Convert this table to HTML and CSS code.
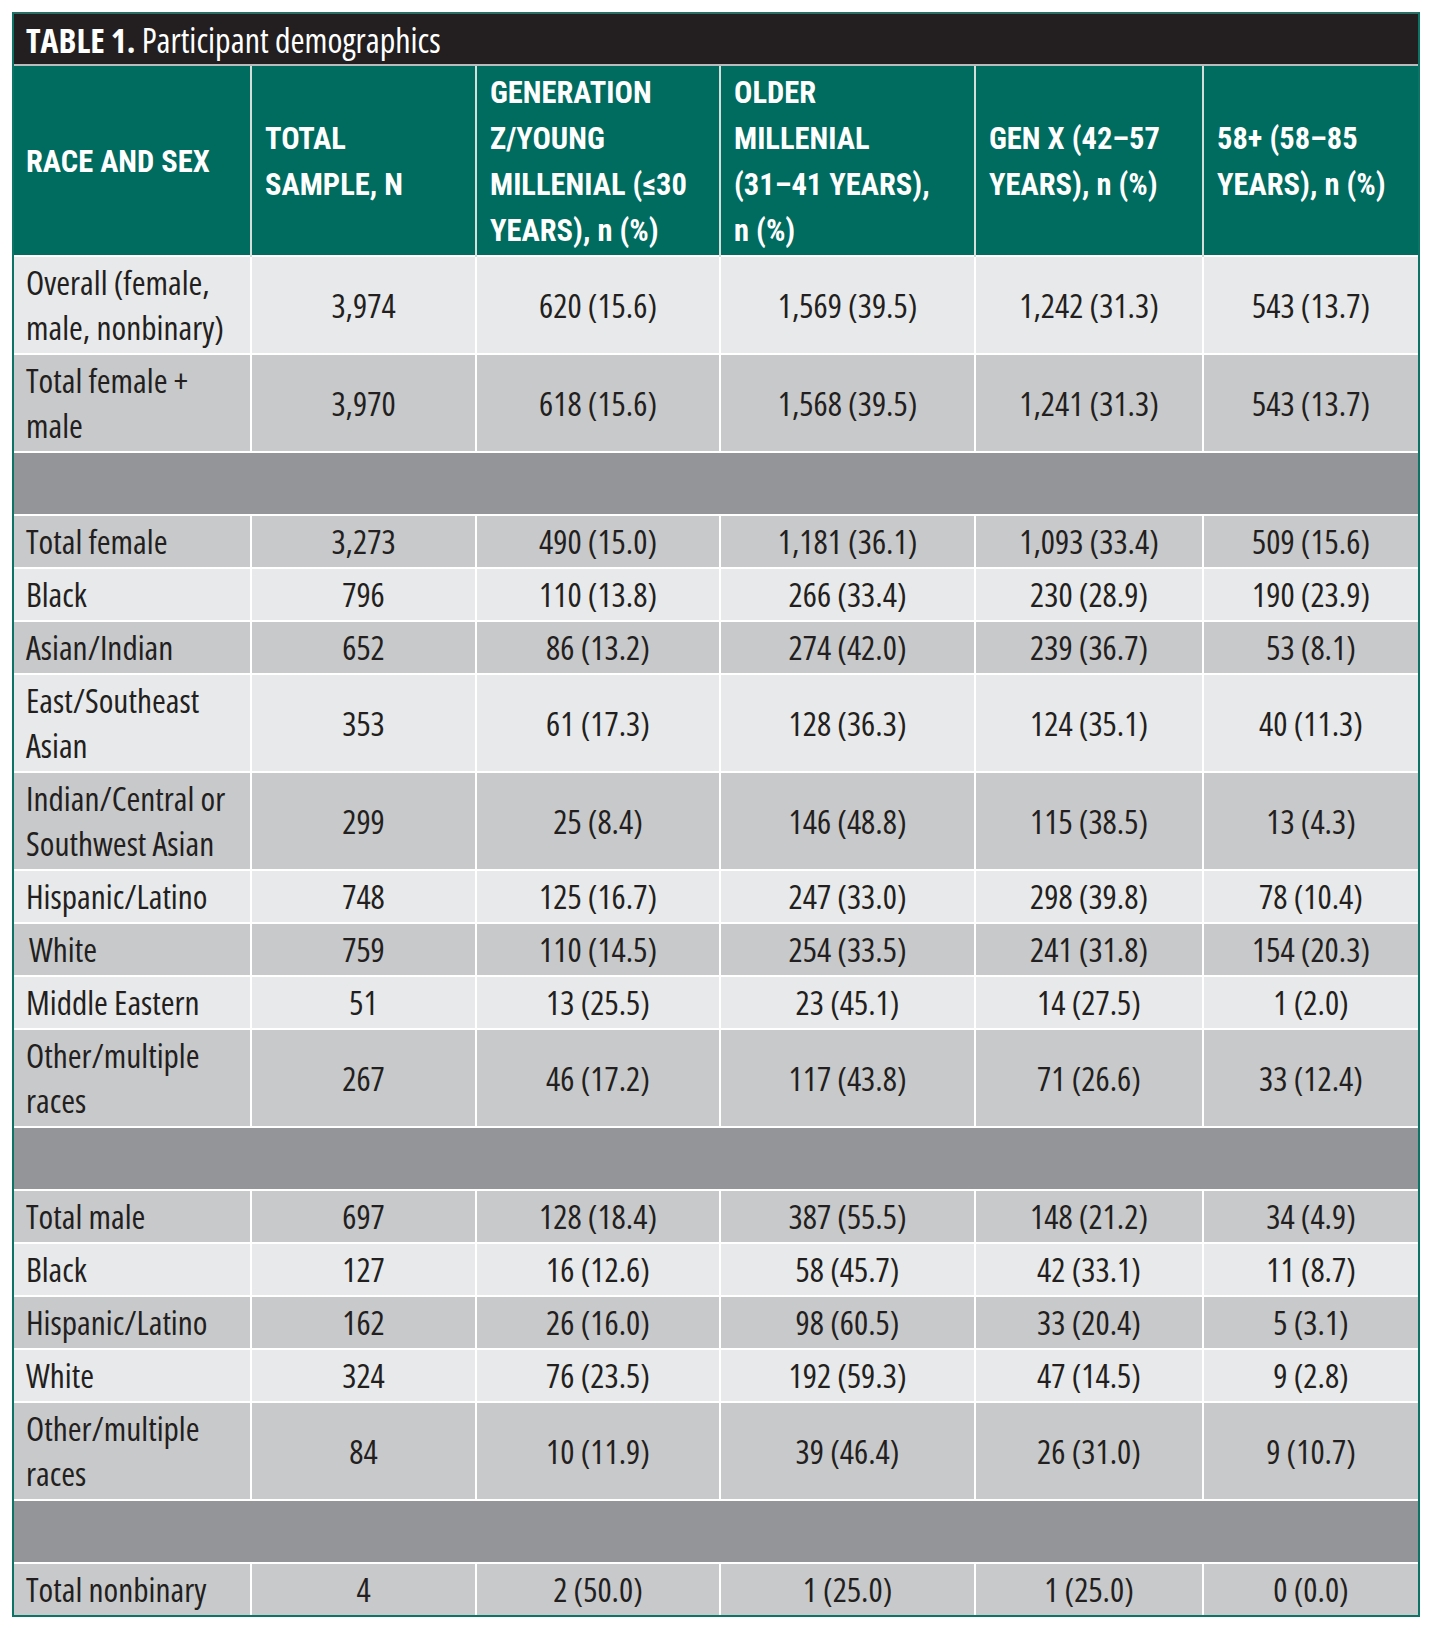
FILE: index.html
```html
<!DOCTYPE html>
<html lang="en">
<head>
<meta charset="utf-8">
<title>Table 1. Participant demographics</title>
<link rel="stylesheet" href="styles.css">
</head>
<body>
<div class="frame">
  <div class="title"><b>TABLE 1.</b> Participant demographics</div>
  <table class="demo">
    <colgroup>
      <col class="c1"><col class="c2"><col class="c3"><col class="c4"><col class="c5"><col class="c6">
    </colgroup>
    <thead>
      <tr>
        <th>RACE AND SEX</th>
        <th>TOTAL SAMPLE, N</th>
        <th>GENERATION Z/YOUNG MILLENIAL (≤30 YEARS), n (%)</th>
        <th>OLDER MILLENIAL <span class="nw">(31–41 YEARS),</span> n (%)</th>
        <th>GEN X <span class="nw">(42–57</span> YEARS), n (%)</th>
        <th>58+ <span class="nw">(58–85</span> YEARS), n (%)</th>
      </tr>
    </thead>
    <tbody>
      <tr class="light"><td>Overall (female, male, nonbinary)</td><td>3,974</td><td>620 (15.6)</td><td>1,569 (39.5)</td><td>1,242 (31.3)</td><td>543 (13.7)</td></tr>
      <tr class="dark"><td>Total female + male</td><td>3,970</td><td>618 (15.6)</td><td>1,568 (39.5)</td><td>1,241 (31.3)</td><td>543 (13.7)</td></tr>
      <tr class="band"><td colspan="6"></td></tr>
      <tr class="dark"><td>Total female</td><td>3,273</td><td>490 (15.0)</td><td>1,181 (36.1)</td><td>1,093 (33.4)</td><td>509 (15.6)</td></tr>
      <tr class="light"><td>Black</td><td>796</td><td>110 (13.8)</td><td>266 (33.4)</td><td>230 (28.9)</td><td>190 (23.9)</td></tr>
      <tr class="dark"><td>Asian/Indian</td><td>652</td><td>86 (13.2)</td><td>274 (42.0)</td><td>239 (36.7)</td><td>53 (8.1)</td></tr>
      <tr class="light"><td>East/Southeast Asian</td><td>353</td><td>61 (17.3)</td><td>128 (36.3)</td><td>124 (35.1)</td><td>40 (11.3)</td></tr>
      <tr class="dark"><td>Indian/Central or Southwest Asian</td><td>299</td><td>25 (8.4)</td><td>146 (48.8)</td><td>115 (38.5)</td><td>13 (4.3)</td></tr>
      <tr class="light"><td>Hispanic/Latino</td><td>748</td><td>125 (16.7)</td><td>247 (33.0)</td><td>298 (39.8)</td><td>78 (10.4)</td></tr>
      <tr class="dark"><td class="nudge">White</td><td>759</td><td>110 (14.5)</td><td>254 (33.5)</td><td>241 (31.8)</td><td>154 (20.3)</td></tr>
      <tr class="light"><td>Middle Eastern</td><td>51</td><td>13 (25.5)</td><td>23 (45.1)</td><td>14 (27.5)</td><td>1 (2.0)</td></tr>
      <tr class="dark"><td>Other/multiple races</td><td>267</td><td>46 (17.2)</td><td>117 (43.8)</td><td>71 (26.6)</td><td>33 (12.4)</td></tr>
      <tr class="band"><td colspan="6"></td></tr>
      <tr class="dark"><td>Total male</td><td>697</td><td>128 (18.4)</td><td>387 (55.5)</td><td>148 (21.2)</td><td>34 (4.9)</td></tr>
      <tr class="light"><td>Black</td><td>127</td><td>16 (12.6)</td><td>58 (45.7)</td><td>42 (33.1)</td><td>11 (8.7)</td></tr>
      <tr class="dark"><td>Hispanic/Latino</td><td>162</td><td>26 (16.0)</td><td>98 (60.5)</td><td>33 (20.4)</td><td>5 (3.1)</td></tr>
      <tr class="light"><td>White</td><td>324</td><td>76 (23.5)</td><td>192 (59.3)</td><td>47 (14.5)</td><td>9 (2.8)</td></tr>
      <tr class="dark"><td>Other/multiple races</td><td>84</td><td>10 (11.9)</td><td>39 (46.4)</td><td>26 (31.0)</td><td>9 (10.7)</td></tr>
      <tr class="band"><td colspan="6"></td></tr>
      <tr class="dark"><td>Total nonbinary</td><td>4</td><td>2 (50.0)</td><td>1 (25.0)</td><td>1 (25.0)</td><td>0 (0.0)</td></tr>
    </tbody>
  </table>
</div>
</body>
</html>
```

FILE: styles.css
```css
html, body {
  margin: 0;
  padding: 0;
  background: #ffffff;
}

body {
  padding: 12px 0 0 12px;
  font-family: "Open Sans", "Noto Sans", sans-serif;
  font-stretch: 75%;
  color: #231f20;
}

.frame {
  width: 1408px;
  border: 2px solid #0b7466;
  border-top-color: #2a6f66;
  box-sizing: border-box;
  background: #ffffff;
}

.title {
  height: 50px;
  background: #231f20;
  color: #ffffff;
  font-size: 34px;
  line-height: 52px;
  padding-left: 12px;
  border-bottom: 2px solid #b9bbbd;
  box-sizing: content-box;
  white-space: nowrap;
}

.title b {
  font-weight: 700;
}

.demo {
  width: 100%;
  table-layout: fixed;
  border-collapse: collapse;
}

.c1 { width: 237px; }
.c2 { width: 225px; }
.c3 { width: 244px; }
.c4 { width: 255px; }
.c5 { width: 228px; }
.c6 { width: 215px; }

.demo th {
  background: #006b5f;
  color: #ffffff;
  font-family: "Roboto", "Open Sans", sans-serif;
  font-stretch: 75%;
  font-weight: 700;
  font-size: 30.5px;
  line-height: 46px;
  text-align: left;
  vertical-align: middle;
  padding: 2px 26px 0 13px;
  height: 190px;
  box-sizing: border-box;
  border-left: 2px solid #d4dedb;
}

.demo th:first-child {
  border-left: none;
  padding-left: 12px;
}

.nw {
  white-space: nowrap;
}

.demo td {
  font-size: 33.4px;
  line-height: 45px;
  padding: 3px 8px;
  text-align: center;
  vertical-align: middle;
  border: 2px solid #ffffff;
}

.demo td:first-child {
  text-align: left;
  padding-left: 12px;
  padding-right: 10px;
  border-left: none;
}

.demo td:last-child {
  border-right: none;
}

.demo tbody tr:last-child td {
  border-bottom: none;
}

.light td {
  background: #e8e9ea;
}

.dark td {
  background: #c8c9cb;
}

.band td {
  background: #939598;
  height: 61px;
  padding: 0;
}

.nudge {
  text-indent: 3px;
}
```
